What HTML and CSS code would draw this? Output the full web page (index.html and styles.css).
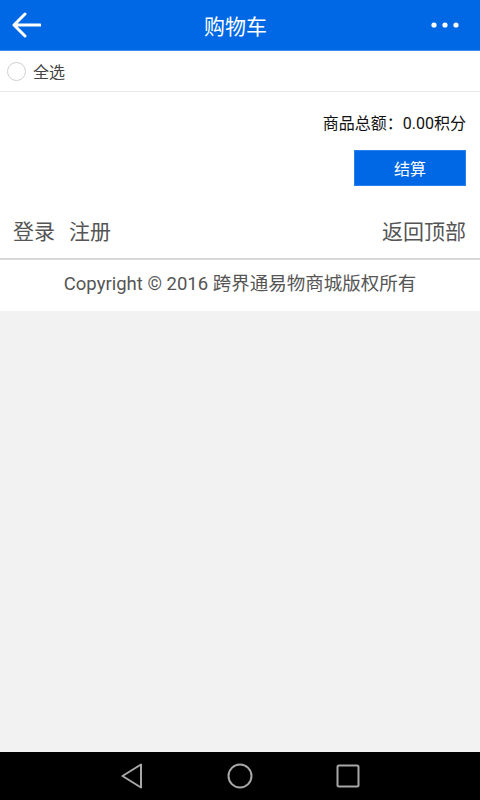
FILE: index.html
```html
<!DOCTYPE html>
<html lang="zh-CN">
<head>
    <meta charset="UTF-8">
    <meta name="viewport" content="width=device-width, initial-scale=1.0">
    <title>购物车</title>
    <link rel="stylesheet" href="styles.css">
</head>
<body>
    <header class="top-bar">
        <a class="back-btn" href="#">
            <svg width="30" height="26" viewBox="0 0 30 26">
                <path d="M3 13 H29 M14 2 L3 13 L14 24" fill="none" stroke="#fff" stroke-width="3" stroke-linecap="round" stroke-linejoin="round"/>
            </svg>
        </a>
        <h1 class="title">购物车</h1>
        <a class="more-btn" href="#">
            <svg width="30" height="8" viewBox="0 0 30 8">
                <circle cx="4" cy="4" r="2.6" fill="#fff"/>
                <circle cx="15" cy="4" r="2.6" fill="#fff"/>
                <circle cx="26" cy="4" r="2.6" fill="#fff"/>
            </svg>
        </a>
    </header>

    <div class="cart">
        <div class="select-all">
            <span class="check"></span>
            <span>全选</span>
        </div>
        <div class="summary">
            <p class="total">商品总额：0.00积分</p>
            <button class="pay-btn">结算</button>
        </div>
        <div class="links">
            <div class="left-links">
                <a href="#">登录</a>
                <a href="#">注册</a>
            </div>
            <a href="#">返回顶部</a>
        </div>
        <div class="copyright">Copyright © 2016 跨界通易物商城版权所有</div>
    </div>

    <nav class="sys-bar">
        <svg width="24" height="26" viewBox="0 0 24 26">
            <path d="M21 1.5 L2.5 13 L21 24.5 Z" fill="none" stroke="#a8a8a8" stroke-width="2" stroke-linejoin="round"/>
        </svg>
        <svg width="26" height="26" viewBox="0 0 26 26">
            <circle cx="13" cy="13" r="11.5" fill="none" stroke="#a8a8a8" stroke-width="2"/>
        </svg>
        <svg width="24" height="24" viewBox="0 0 24 24">
            <rect x="1.5" y="1.5" width="21" height="21" rx="1.5" fill="none" stroke="#a8a8a8" stroke-width="2"/>
        </svg>
    </nav>
</body>
</html>
```

FILE: styles.css
```css
body {
    margin: 0;
    padding: 0;
    font-family: Roboto, "Noto Sans CJK SC", sans-serif;
    background-color: #f2f2f2;
    color: #333;
}
a {
    color: inherit;
    text-decoration: none;
}
.top-bar {
    height: 50px;
    background-color: #0067e5;
    border-bottom: 1px solid #3a8bf0;
    display: flex;
    align-items: center;
    justify-content: space-between;
    padding: 0 20px 0 11px;
}
.back-btn, .more-btn {
    display: flex;
    width: 48px;
}
.more-btn {
    justify-content: flex-end;
}
.title {
    margin: 0;
    font-size: 21px;
    font-weight: normal;
    color: #fff;
}
.cart {
    background-color: #fff;
}
.select-all {
    height: 40px;
    display: flex;
    align-items: center;
    padding-left: 7px;
    font-size: 16px;
    color: #444;
    border-bottom: 1px solid #e8e8e8;
}
.check {
    width: 17px;
    height: 17px;
    border: 1px solid #cfcfcf;
    border-radius: 50%;
    margin-right: 7px;
}
.summary {
    display: flex;
    flex-direction: column;
    align-items: flex-end;
    padding: 22px 14px 14px;
}
.total {
    margin: 0;
    font-size: 16px;
    line-height: 20px;
    color: #111;
}
.pay-btn {
    margin-top: 16px;
    width: 112px;
    height: 36px;
    border: 1px solid #2a7ff0;
    background-color: #0067e5;
    color: #fff;
    font-family: inherit;
    font-size: 16px;
}
.links {
    display: flex;
    justify-content: space-between;
    padding: 18px 14px 12px 13px;
    font-size: 21px;
    line-height: 28px;
    color: #555;
}
.left-links {
    display: flex;
    gap: 14px;
}
.copyright {
    border-top: 2px solid #d9d9d9;
    height: 51px;
    line-height: 48px;
    text-align: center;
    font-size: 18.5px;
    color: #555;
}
.sys-bar {
    position: fixed;
    left: 0;
    right: 0;
    bottom: 0;
    height: 48px;
    background-color: #000;
    display: flex;
    align-items: center;
    justify-content: center;
    gap: 83px;
}
```
